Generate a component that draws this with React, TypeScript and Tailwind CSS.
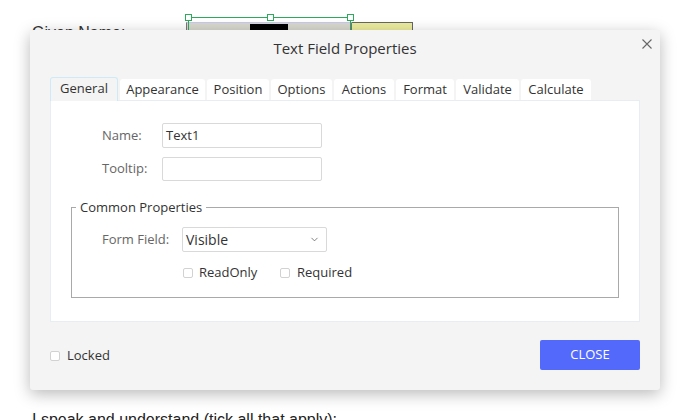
import { ChevronDown } from 'lucide-react';

const tabs = [
  { label: 'General', w: 'w-[68px]' },
  { label: 'Appearance', w: 'w-[85px]' },
  { label: 'Position', w: 'w-[62px]' },
  { label: 'Options', w: 'w-[61px]' },
  { label: 'Actions', w: 'w-[60px]' },
  { label: 'Format', w: 'w-[58px]' },
  { label: 'Validate', w: 'w-[63px]' },
  { label: 'Calculate', w: 'w-[70px]' },
];

function Checkbox() {
  return <span className="inline-block w-[10px] h-[10px] border border-[#d2d2d2] rounded-[2px] bg-white" />;
}

function Background() {
  return (
    <div className="h-full flex flex-col justify-between font-['Liberation_Sans',Arial,sans-serif] text-[16px] text-[#222]">
      <div className="flex pt-[17px]">
        <span className="pl-[32px] pt-[7px] w-[186px] leading-[18px] text-[#333]">Given Name:</span>
        {/* selected field in the document */}
        <div className="relative w-[166px] h-[20px] mt-[5px] border border-[#777] border-t-[#c8c8ee] bg-[#d8d8cf]">
          <div className="absolute left-[63px] top-[1px] w-[38px] h-[10px] bg-black" />
          <div className="absolute -top-[6px] left-[1px] right-0 h-px bg-[#2eaa5c]" />
          <div className="absolute -top-[6px] left-[1px] w-px h-[20px] bg-[#2eaa5c]" />
          <div className="absolute -top-[6px] right-0 w-px h-[20px] bg-[#2eaa5c]" />
          <div className="absolute -top-[9px] -left-[2px] w-[7px] h-[7px] border border-[#2eaa5c] bg-white" />
          <div className="absolute -top-[9px] left-[80px] w-[7px] h-[7px] border border-[#2eaa5c] bg-white" />
          <div className="absolute -top-[9px] -right-[3px] w-[7px] h-[7px] border border-[#2eaa5c] bg-white" />
        </div>
        <div className="w-[61px] h-[20px] mt-[5px] border border-[#666] border-l-0 bg-[#ecec9e]" />
      </div>
      <p className="pl-[32px] -mb-[10px] leading-[20px]">I speak and understand (tick all that apply):</p>
    </div>
  );
}

function Dialog() {
  return (
    <div className="absolute left-[30px] top-[30px] w-[630px] h-[360px] bg-[#f4f4f4] rounded-[3px] shadow-[0_4px_16px_rgba(0,0,0,0.28)] px-[20px] font-['Open_Sans',sans-serif] text-[13px]">
      <div className="pt-[9px] text-center text-[15px] leading-[18px] text-[#333]">Text Field Properties</div>
      <button className="absolute right-[8px] top-[9px] text-[#666]">
        <svg width="10" height="10" viewBox="0 0 10 10" fill="none" stroke="currentColor" strokeWidth="1.1">
          <path d="M0.5 0.5 L9.5 9.5 M9.5 0.5 L0.5 9.5" />
        </svg>
      </button>

      {/* Tabs */}
      <div className="flex items-end gap-[2px] mt-[20px]">
        {tabs.map((t, i) =>
          i === 0 ? (
            <div
              key={t.label}
              className={`${t.w} h-[24px] -mb-px relative z-10 flex items-center justify-center border border-b-0 border-[#cfeaf6] bg-[#f4f4f4] text-[#333] rounded-t-[3px] pb-[2px]`}
            >
              {t.label}
            </div>
          ) : (
            <div
              key={t.label}
              className={`${t.w} h-[21px] flex items-center justify-center bg-white text-[#333] rounded-t-[3px] pt-[1px]`}
            >
              {t.label}
            </div>
          )
        )}
      </div>

      {/* Panel */}
      <div className="h-[222px] bg-white border border-[#e6eef2] pt-[22px]">
        <div className="flex items-center">
          <span className="w-[60px] ml-[51px] text-[#666]">Name:</span>
          <div className="w-[160px] h-[25px] border border-[#d9d9d9] rounded-[2px] px-[3px] flex items-center text-[#333]">Text1</div>
        </div>
        <div className="flex items-center mt-[9px]">
          <span className="w-[60px] ml-[51px] text-[#666]">Tooltip:</span>
          <div className="w-[160px] h-[24px] border border-[#d9d9d9] rounded-[2px]" />
        </div>

        <fieldset className="ml-[20px] mt-[17px] w-[548px] h-[100px] border border-[#a9a9a9] px-0 pt-[11px]">
          <legend className="ml-[4px] px-[4px] leading-[18px] text-[#333]">Common Properties</legend>
          <div className="flex items-center">
            <span className="ml-[30px] w-[80px] text-[#666]">Form Field:</span>
            <div className="w-[145px] h-[25px] border border-[#d9d9d9] rounded-[2px] pl-[3px] pr-[6px] flex items-center justify-between text-[14px] text-[#333]">
              Visible
              <ChevronDown size={11} strokeWidth={1.6} className="text-[#555]" />
            </div>
          </div>
          <div className="flex items-center mt-[11px] ml-[111px] text-[#333]">
            <Checkbox />
            <span className="ml-[6px] w-[81px]">ReadOnly</span>
            <Checkbox />
            <span className="ml-[7px]">Required</span>
          </div>
        </fieldset>
      </div>

      {/* Footer */}
      <div className="flex items-center justify-between mt-[18px]">
        <div className="flex items-center pt-[2px] text-[#333]">
          <Checkbox />
          <span className="ml-[7px]">Locked</span>
        </div>
        <button className="w-[100px] h-[30px] rounded-[2px] bg-[#5369fb] text-white text-[13px]">CLOSE</button>
      </div>
    </div>
  );
}

export default function App() {
  return (
    <div className="relative w-[690px] h-[420px] overflow-hidden bg-white">
      <Background />
      <Dialog />
    </div>
  );
}
